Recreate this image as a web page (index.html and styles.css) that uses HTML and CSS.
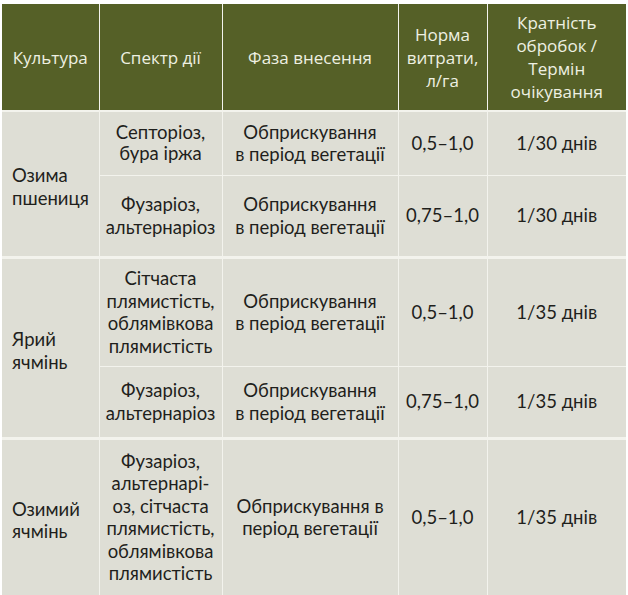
FILE: index.html
```html
<!DOCTYPE html>
<html lang="uk">
<head>
<meta charset="utf-8">
<link rel="stylesheet" href="styles.css">
</head>
<body>
<table class="grid">
  <colgroup>
    <col class="c1"><col class="c2"><col class="c3"><col class="c4"><col class="c5">
  </colgroup>
  <thead>
    <tr class="head">
      <th>Культура</th>
      <th>Спектр дії</th>
      <th>Фаза внесення</th>
      <th>Норма<br>витрати,<br>л/га</th>
      <th>Кратність<br>обробок /<br>Термін<br>очікування</th>
    </tr>
  </thead>
  <tbody>
    <tr class="r1">
      <td class="crop" rowspan="2">Озима<br>пшениця</td>
      <td class="tight">Септоріоз,<br>бура іржа</td>
      <td>Обприскування<br>в період вегетації</td>
      <td>0,5–1,0</td>
      <td>1/30 днів</td>
    </tr>
    <tr class="r2 group-end">
      <td>Фузаріоз,<br>альтернаріоз</td>
      <td>Обприскування<br>в період вегетації</td>
      <td>0,75–1,0</td>
      <td>1/30 днів</td>
    </tr>
    <tr class="r3">
      <td class="crop" rowspan="2">Ярий<br>ячмінь</td>
      <td>Сітчаста<br>плямистість,<br>облямівкова<br>плямистість</td>
      <td>Обприскування<br>в період вегетації</td>
      <td>0,5–1,0</td>
      <td>1/35 днів</td>
    </tr>
    <tr class="r4 group-end">
      <td>Фузаріоз,<br>альтернаріоз</td>
      <td>Обприскування<br>в період вегетації</td>
      <td>0,75–1,0</td>
      <td>1/35 днів</td>
    </tr>
    <tr class="r5">
      <td class="crop">Озимий<br>ячмінь</td>
      <td>Фузаріоз,<br>альтернарі-<br>оз, сітчаста<br>плямистість,<br>облямівкова<br>плямистість</td>
      <td>Обприскування в<br>період вегетації</td>
      <td>0,5–1,0</td>
      <td>1/35 днів</td>
    </tr>
  </tbody>
</table>
</body>
</html>
```
FILE: styles.css
```css
html, body {
  margin: 0;
  padding: 0;
  background: #ffffff;
}

.grid {
  margin: 4px 0 0 2px;
  width: 624px;
  border-collapse: collapse;
  table-layout: fixed;
  font-family: Lato, "Open Sans", sans-serif;
}

.c1 { width: 97px; }
.c2 { width: 123px; }
.c3 { width: 176px; }
.c4 { width: 89px; }
.c5 { width: 139px; }

.grid th,
.grid td {
  border: 1.5px solid #f3f3ed;
  padding: 0 2px;
  text-align: center;
  vertical-align: middle;
}

.grid thead th {
  border-top: none;
  border-bottom: 2px solid #f3f3ed;
}

.grid tr > :first-child { border-left: none; }
.grid tr > :last-child { border-right: none; }

.head {
  height: 107px;
}

.head th {
  background: #556027;
  color: #eef0e2;
  font-family: "Open Sans", sans-serif;
  font-weight: 400;
  font-size: 17px;
  line-height: 23px;
}

.grid td {
  background: #deded5;
  color: #1f1f1c;
  font-size: 18.5px;
  line-height: 22.5px;
}

.grid td.tight {
  line-height: 21px;
}

.grid td.crop {
  text-align: left;
  padding-left: 10px;
  padding-top: 6px;
}

.group-end td,
.grid td.crop[rowspan] {
  border-bottom: 3px solid #f3f3ed;
}

.r1 { height: 64px; }
.r2 { height: 82px; }
.r3 { height: 109px; }
.r4 { height: 72px; }
.r5 { height: 157px; }
.grid tbody tr:last-child td { border-bottom: none; }
```
